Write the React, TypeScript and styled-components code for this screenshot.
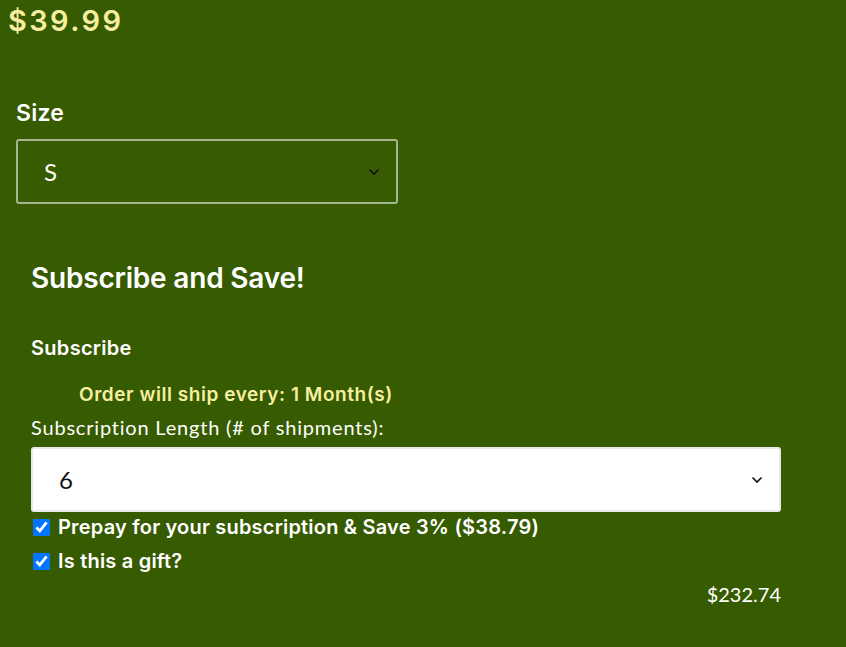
import React from "react";
import styled, { createGlobalStyle } from "styled-components";

const Global = createGlobalStyle`
  html, body { margin: 0; padding: 0; background: #375b01; }
  body { font-family: "Inter", "Open Sans", sans-serif; }
`;

const Page = styled.div`
  width: 846px;
  height: 647px;
  background: #375b01;
  box-sizing: border-box;
  padding: 4px 0 0 8px;
  overflow: hidden;
`;

const Price = styled.div`
  font-family: "Inter", sans-serif;
  font-weight: 600;
  font-size: 29px;
  line-height: 34px;
  color: #f6efa0;
  letter-spacing: 2.4px;
`;

const SizeBlock = styled.div`
  padding: 62px 0 0 8px;
  display: flex;
  flex-direction: column;
  gap: 13px;
`;

const Label = styled.div`
  font-family: "Inter", sans-serif;
  font-weight: 600;
  font-size: 23px;
  line-height: 26px;
  color: #ffffff;
  letter-spacing: 0.2px;
`;

const SelectBox = styled.div<{ $light?: boolean; $width: number }>`
  width: ${(p) => p.$width}px;
  height: 65px;
  box-sizing: border-box;
  border: ${(p) => (p.$light ? "2px solid #e8e8e8" : "2px solid #a4b48e")};
  border-radius: 3px;
  background: ${(p) => (p.$light ? "#ffffff" : "transparent")};
  color: ${(p) => (p.$light ? "#111111" : "#ffffff")};
  display: flex;
  align-items: center;
  justify-content: space-between;
  padding: 0 16px 0 26px;
  font-family: "Lato", sans-serif;
  font-size: 24px;
`;

const Chevron = () => (
  <svg width="12" height="8" viewBox="0 0 12 8" fill="none">
    <path d="M1.5 1.5 L6 6 L10.5 1.5" stroke="#111" strokeWidth="1.6" />
  </svg>
);

const Subscribe = styled.div`
  padding: 57px 0 0 23px;
  display: flex;
  flex-direction: column;
`;

const Heading = styled.div`
  font-family: "Inter", sans-serif;
  font-weight: 600;
  font-size: 28px;
  line-height: 34px;
  color: #ffffff;
  letter-spacing: -0.2px;
`;

const SubLabel = styled.div`
  margin-top: 41px;
  font-family: "Inter", sans-serif;
  font-weight: 600;
  font-size: 20px;
  line-height: 24px;
  color: #ffffff;
  letter-spacing: 0.3px;
`;

const ShipNote = styled.div`
  margin: 23px 0 0 48px;
  font-family: "Inter", sans-serif;
  font-weight: 600;
  font-size: 19px;
  line-height: 24px;
  color: #f6efa0;
  letter-spacing: 0.55px;
`;

const LengthLabel = styled.div`
  margin-top: 8px;
  margin-bottom: 8px;
  font-family: "Lato", sans-serif;
  font-size: 20px;
  line-height: 24px;
  color: #ffffff;
  letter-spacing: 0.8px;
`;

const Checks = styled.div`
  display: flex;
  flex-direction: column;
  gap: 4px;
`;

const CheckRow = styled.label`
  display: flex;
  align-items: center;
  gap: 8px;
  height: 30px;
  font-family: "Inter", sans-serif;
  font-weight: 600;
  font-size: 20px;
  color: #ffffff;
  letter-spacing: 0.2px;
  margin-left: 2px;
`;

const Check = styled.input`
  width: 17px;
  height: 17px;
  margin: 0;
  accent-color: #0075ff;
`;

const Total = styled.div`
  width: 750px;
  text-align: right;
  margin-top: 6px;
  font-family: "Lato", sans-serif;
  font-size: 20px;
  line-height: 24px;
  color: #ffffff;
`;

export default function App() {
  return (
    <>
      <Global />
      <Page>
        <Price>$39.99</Price>
        <SizeBlock>
          <Label>Size</Label>
          <SelectBox $width={382}>
            <span>S</span>
            <Chevron />
          </SelectBox>
        </SizeBlock>
        <Subscribe>
          <Heading>Subscribe and Save!</Heading>
          <SubLabel>Subscribe</SubLabel>
          <ShipNote>Order will ship every: 1 Month(s)</ShipNote>
          <LengthLabel>Subscription Length (# of shipments):</LengthLabel>
          <SelectBox $light $width={750}>
            <span>6</span>
            <Chevron />
          </SelectBox>
          <Checks>
            <CheckRow>
              <Check type="checkbox" defaultChecked />
              Prepay for your subscription &amp; Save 3% ($38.79)
            </CheckRow>
            <CheckRow>
              <Check type="checkbox" defaultChecked />
              Is this a gift?
            </CheckRow>
          </Checks>
          <Total>$232.74</Total>
        </Subscribe>
      </Page>
    </>
  );
}
